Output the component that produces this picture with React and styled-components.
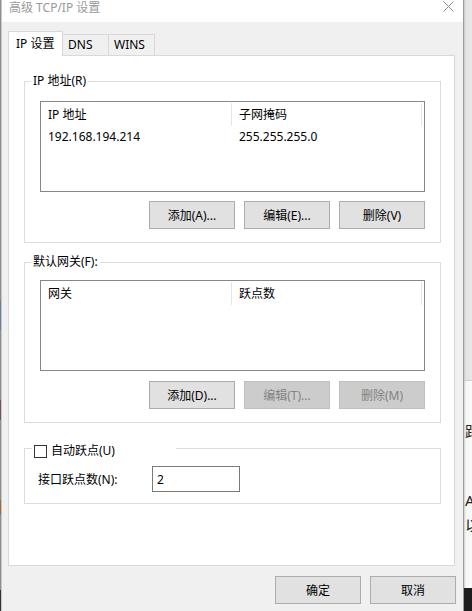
import styled, { createGlobalStyle } from "styled-components";

const GlobalStyle = createGlobalStyle`
  html, body {
    margin: 0;
    padding: 0;
    background: #f0f0f0;
  }
  body {
    font-family: "Noto Sans", "Noto Sans CJK SC", sans-serif;
    font-size: 12px;
    color: #000;
  }
`;

const UI_FONT = `"Noto Sans", "Noto Sans CJK SC", sans-serif`;

// Desktop slice: the dialog with bits of the windows behind it
const Screen = styled.div`
  display: flex;
  width: 472px;
  height: 611px;
  overflow: hidden;
`;

const BackEdge = styled.div`
  width: 1px;
  flex: none;
  background: linear-gradient(
    #8f8f8f 0 300px,
    #6a7fa0 300px 330px,
    #8f8f8f 330px 400px,
    #7a5060 400px 420px,
    #8f8f8f 420px 500px,
    #a06a40 500px 515px,
    #8f8f8f 515px 590px,
    #333 590px
  );
`;

const Dialog = styled.div`
  width: 463px;
  flex: none;
  display: flex;
  flex-direction: column;
  border-left: 1px solid #c6c6c6;
  border-right: 1px solid #9c9c9c;
  box-sizing: border-box;
  background: #f0f0f0;
  font-family: ${UI_FONT};
`;

const TitleBar = styled.div`
  height: 22px;
  flex: none;
  background: #fff;
  display: flex;
  justify-content: space-between;
  padding: 0 9px 0 7px;
`;

const Title = styled.span`
  color: #999;
  font-size: 12px;
  line-height: 15px;
`;

const CloseGlyph = styled.svg`
  margin-top: 1px;
  width: 11px;
  height: 11px;
`;

const Body = styled.div`
  flex: 1;
  display: flex;
  flex-direction: column;
  padding: 9px 0 0 6px;
`;

const TabStrip = styled.div`
  display: flex;
  align-items: flex-end;
  height: 25px;
  margin-bottom: -1px;
  position: relative;
  z-index: 1;
`;

const Tab = styled.div`
  box-sizing: border-box;
  display: flex;
  align-items: center;
  width: ${(p) => p.$w}px;
  height: ${(p) => (p.$active ? 25 : 22)}px;
  padding-left: ${(p) => (p.$active ? 7 : 5)}px;
  background: ${(p) => (p.$active ? "#fff" : "#f0f0f0")};
  border: 1px solid #d9d9d9;
  border-left: ${(p) => (p.$first ? "1px solid #d9d9d9" : "none")};
  border-bottom: ${(p) => (p.$active ? "none" : "1px solid #d9d9d9")};
  line-height: 14px;
`;

const TabPanel = styled.div`
  box-sizing: border-box;
  width: 447px;
  height: 511px;
  background: #fff;
  border: 1px solid #d9d9d9;
  padding: 0 13px 0 15px;
  display: flex;
  flex-direction: column;
`;

const GroupBox = styled.fieldset`
  margin: ${(p) => p.$mt}px 0 0;
  padding: ${(p) => p.$pt}px 15px ${(p) => p.$pb}px ${(p) => p.$pl ?? 15}px;
  border: 1px solid #dcdcdc;
  min-width: 0;
  display: flex;
  flex-direction: column;
`;

const Legend = styled.legend`
  margin-left: ${(p) => p.$ml ?? -9}px;
  padding: ${(p) => p.$pt ?? 0}px 2px 0;
  width: ${(p) => (p.$w ? `${p.$w}px` : "auto")};
  box-sizing: border-box;
  line-height: 16px;
  display: flex;
  align-items: center;
  gap: 4px;
`;

const ListView = styled.div`
  box-sizing: border-box;
  height: 91px;
  border: 1px solid #828790;
  background: #fff;
`;

const ListHeader = styled.div`
  display: flex;
  height: 24px;
`;

const HeaderCell = styled.div`
  box-sizing: border-box;
  width: ${(p) => p.$w}px;
  height: 23px;
  margin-top: 1px;
  padding-left: 7px;
  border-right: 1px solid #e5e5e5;
  line-height: 23px;
`;

const ListRow = styled.div`
  display: flex;
  height: 22px;
`;

const Cell = styled.div`
  box-sizing: border-box;
  width: ${(p) => p.$w}px;
  padding-left: 7px;
  line-height: 22px;
`;

const ButtonRow = styled.div`
  display: flex;
  justify-content: flex-end;
  gap: 9px;
  margin-top: ${(p) => p.$mt}px;
`;

const PushButton = styled.button`
  box-sizing: border-box;
  width: 86px;
  height: 28px;
  padding: 0;
  font-family: ${UI_FONT};
  font-size: 12px;
  color: #000;
  background: #e1e1e1;
  border: 1px solid #adadad;
  border-radius: 0;

  &:disabled {
    color: #838383;
    background: #cccccc;
    border-color: #bfbfbf;
  }
`;

const CheckBox = styled.span`
  box-sizing: border-box;
  width: 13px;
  height: 13px;
  border: 1px solid #333;
  background: #fff;
  flex: none;
`;

const FieldRow = styled.div`
  display: grid;
  grid-template-columns: 114px 88px;
  align-items: center;
`;

const NumberInput = styled.input`
  box-sizing: border-box;
  width: 88px;
  height: 26px;
  padding: 0 4px;
  border: 1px solid #7a7a7a;
  font-family: ${UI_FONT};
  font-size: 12px;
  color: #000;
  outline: none;
`;

const Footer = styled.div`
  display: flex;
  justify-content: flex-end;
  gap: 9px;
  margin-top: 10px;
  padding-right: 7px;
`;

// Strip of the window lying behind the dialog
const BackStrip = styled.div`
  flex: 1;
  display: flex;
  flex-direction: column;
  overflow: hidden;
`;

const BackTop = styled.div`
  height: 380px;
  flex: none;
  background: linear-gradient(90deg, #c9c9c9, #e4e4e4 2px, #e8e8e8);
  border-bottom: 1px solid #cfcfcf;
`;

const BackPage = styled.div`
  flex: 1;
  background: linear-gradient(90deg, #cfcfcf, #f7f7f7 2px, #fafafa);
  display: flex;
  flex-direction: column;
  padding-left: 1px;
  font-family: "Noto Sans", "Noto Sans CJK SC", sans-serif;
  font-size: 15px;
  color: #222;
  white-space: nowrap;
`;

const BackText = styled.span`
  margin-top: ${(p) => p.$mt}px;
  line-height: 16px;
`;

const BackBottom = styled.div`
  height: 23px;
  flex: none;
  background: #1e1e1e;
`;

const columns = [191, 190];

const App = () => (
  <>
    <GlobalStyle />
    <Screen>
      <BackEdge />
      <Dialog>
        <TitleBar>
          <Title>高级 TCP/IP 设置</Title>
          <CloseGlyph viewBox="0 0 11 11">
            <path d="M0.5 0.5 L10.5 10.5 M10.5 0.5 L0.5 10.5" stroke="#8a8a8a" strokeWidth="1" />
          </CloseGlyph>
        </TitleBar>
        <Body>
          <TabStrip>
            <Tab $active $first $w={55}>IP 设置</Tab>
            <Tab $w={46}>DNS</Tab>
            <Tab $w={46}>WINS</Tab>
          </TabStrip>
          <TabPanel>
            <GroupBox $mt={17} $pt={12} $pb={13}>
              <Legend>IP 地址(R)</Legend>
              <ListView>
                <ListHeader>
                  <HeaderCell $w={columns[0]}>IP 地址</HeaderCell>
                  <HeaderCell $w={columns[1]}>子网掩码</HeaderCell>
                </ListHeader>
                <ListRow>
                  <Cell $w={columns[0]}>192.168.194.214</Cell>
                  <Cell $w={columns[1]}>255.255.255.0</Cell>
                </ListRow>
              </ListView>
              <ButtonRow $mt={9}>
                <PushButton>添加(A)...</PushButton>
                <PushButton>编辑(E)...</PushButton>
                <PushButton>删除(V)</PushButton>
              </ButtonRow>
            </GroupBox>

            <GroupBox $mt={11} $pt={10} $pb={13}>
              <Legend>默认网关(F):</Legend>
              <ListView>
                <ListHeader>
                  <HeaderCell $w={columns[0]}>网关</HeaderCell>
                  <HeaderCell $w={columns[1]}>跃点数</HeaderCell>
                </ListHeader>
              </ListView>
              <ButtonRow $mt={10}>
                <PushButton>添加(D)...</PushButton>
                <PushButton disabled>编辑(T)...</PushButton>
                <PushButton disabled>删除(M)</PushButton>
              </ButtonRow>
            </GroupBox>

            <GroupBox $mt={14} $pt={7} $pb={11} $pl={13}>
              <Legend $ml={-6} $pt={6} $w={144}>
                <CheckBox />
                自动跃点(U)
              </Legend>
              <FieldRow>
                <span>接口跃点数(N):</span>
                <NumberInput defaultValue="2" />
              </FieldRow>
            </GroupBox>
          </TabPanel>
          <Footer>
            <PushButton>确定</PushButton>
            <PushButton>取消</PushButton>
          </Footer>
        </Body>
      </Dialog>
      <BackStrip>
        <BackTop />
        <BackPage>
          <BackText $mt={42}>距</BackText>
          <BackText $mt={53}>AI</BackText>
          <BackText $mt={9}>以</BackText>
        </BackPage>
        <BackBottom />
      </BackStrip>
    </Screen>
  </>
);

export default App;
